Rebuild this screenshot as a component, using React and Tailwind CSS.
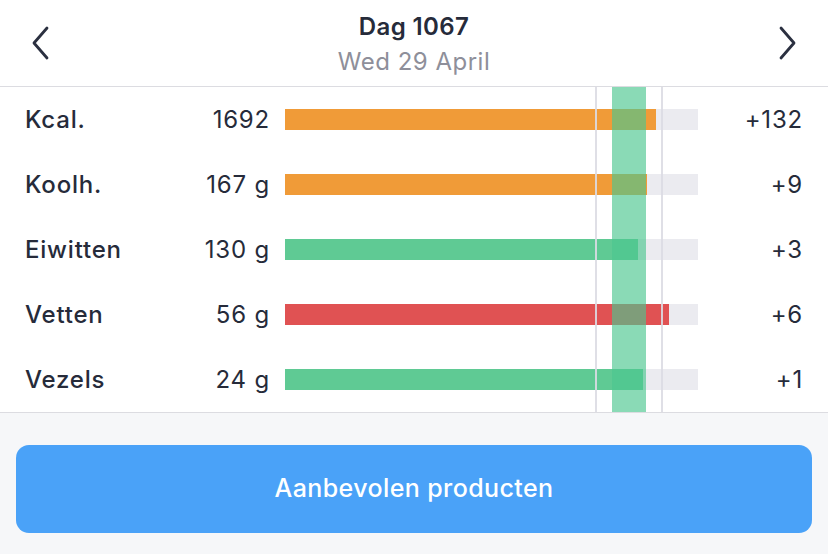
import React from "react";

const rows = [
  { label: "Kcal.", value: "1692", fill: 371, color: "bg-[#f09b38]", diff: "+132" },
  { label: "Koolh.", value: "167 g", fill: 362, color: "bg-[#f09b38]", diff: "+9" },
  { label: "Eiwitten", value: "130 g", fill: 353, color: "bg-[#5fca94]", diff: "+3" },
  { label: "Vetten", value: "56 g", fill: 384, color: "bg-[#e05253]", diff: "+6" },
  { label: "Vezels", value: "24 g", fill: 358, color: "bg-[#5fca94]", diff: "+1" },
];

function Chevron({ dir }) {
  return (
    <svg width="20" height="34" viewBox="0 0 20 34" fill="none">
      {dir === "left" ? (
        <path d="M16 2 L3 17 L16 32" stroke="#2b3040" strokeWidth="2.8" strokeLinecap="round" strokeLinejoin="round" />
      ) : (
        <path d="M4 2 L17 17 L4 32" stroke="#2b3040" strokeWidth="2.8" strokeLinecap="round" strokeLinejoin="round" />
      )}
    </svg>
  );
}

export default function App() {
  return (
    <div
      className="w-[828px] h-[554px] bg-[#f6f7f9] flex flex-col overflow-hidden text-[#262b3a]"
      style={{ fontFamily: "Inter, 'Noto Sans', sans-serif" }}
    >
      <div className="h-[87px] bg-white border-b border-[#dcdce1] flex items-center justify-between pl-[31px] pr-[31px]">
        <Chevron dir="left" />
        <div className="flex flex-col items-center gap-[3px] pt-[4px]">
          <div className="text-[24px] font-semibold leading-[30px] tracking-[0.4px]">Dag 1067</div>
          <div className="text-[24px] leading-[34px] text-[#8e8f9a] tracking-[0.5px]">Wed 29 April</div>
        </div>
        <Chevron dir="right" />
      </div>

      <div className="relative bg-white border-b border-[#dcdce1]">
        {rows.map((r) => (
          <div key={r.label} className="h-[65px] flex items-center pl-[25px] pr-[25px]">
            <div className="w-[160px] text-[24px] font-medium tracking-[0.8px]">{r.label}</div>
            <div className="w-[85px] text-right text-[24px] tracking-[0.8px]">{r.value}</div>
            <div className="ml-[15px] w-[413px] h-[21px] bg-[#ebebf0]">
              <div className={`h-full ${r.color}`} style={{ width: r.fill }} />
            </div>
            <div className="flex-1 text-right text-[24px] tracking-[0.8px]">{r.diff}</div>
          </div>
        ))}
        <div className="absolute top-0 bottom-0 left-[595px] w-[2px] bg-[#dcdce3]/90" />
        <div className="absolute top-0 bottom-0 left-[661px] w-[2px] bg-[#dcdce3]/90" />
        <div className="absolute top-0 bottom-0 left-[612px] w-[34px] bg-[#4bc68f]/65" />
      </div>

      <div className="flex-1 px-[16px] pt-[32px]">
        <button className="w-full h-[88px] rounded-[13px] bg-[#4aa2f8] text-white text-[25px] font-medium tracking-[0.4px]">
          Aanbevolen producten
        </button>
      </div>
    </div>
  );
}
